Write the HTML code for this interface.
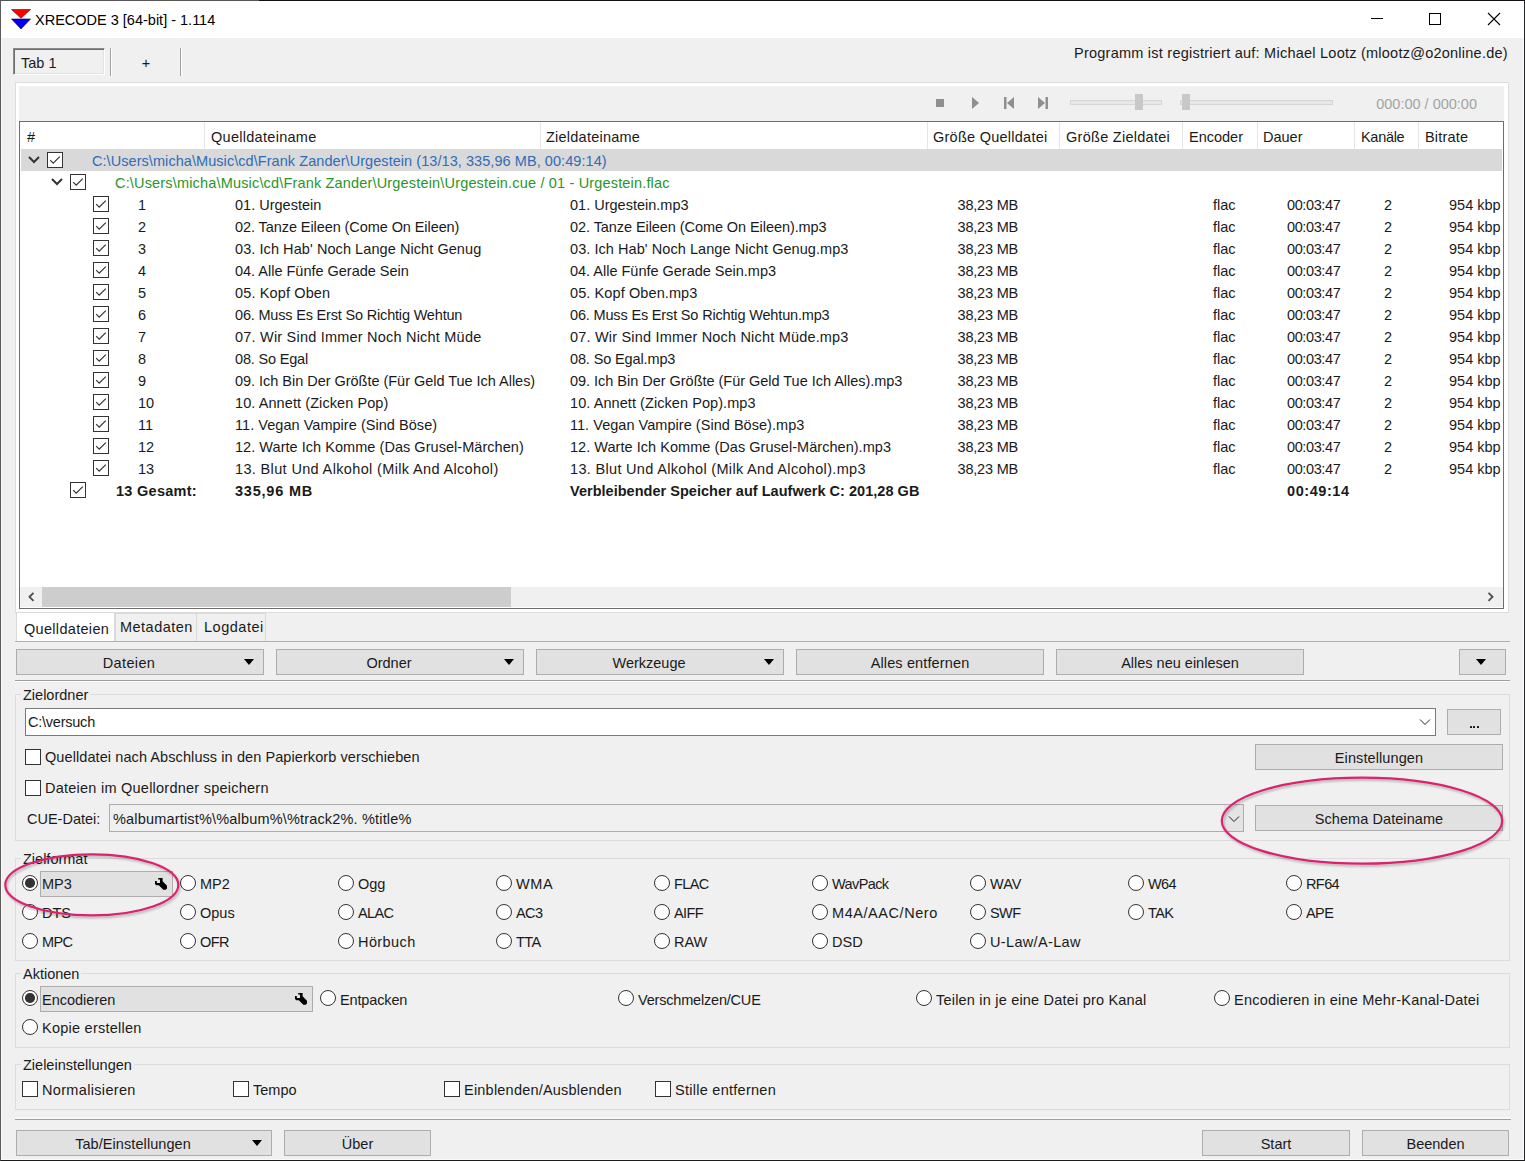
<!DOCTYPE html><html><head><meta charset="utf-8"><style>
html,body{margin:0;padding:0}
body{width:1525px;height:1161px;position:relative;overflow:hidden;background:#f0f0f0;font-family:"Liberation Sans",sans-serif;font-size:14.5px;color:#1a1a1a}
.t{position:absolute;white-space:nowrap;line-height:20px;height:20px}
.r{position:absolute}
.cb{position:absolute;width:16px;height:16px;box-sizing:border-box;border:1px solid #333;background:#fff}
.cb svg{position:absolute;left:-1px;top:-1px}
.rb{position:absolute;width:16px;height:16px;box-sizing:border-box;border:1px solid #333;border-radius:50%;background:#fff}
.rb .dot{position:absolute;left:2.25px;top:2.25px;width:9.5px;height:9.5px;border-radius:50%;background:#333}
.tri{position:absolute;width:0;height:0}
b{font-weight:bold}
</style></head><body>
<div class="r" style="left:0px;top:0px;width:1525px;height:1161px;box-sizing:border-box;border:1px solid #383838;border-left-color:#5a5a5a;border-right-color:#202828;border-bottom-color:#1c1c1c"></div>
<div class="r" style="left:0px;top:0px;width:259px;height:1px;background:#555"></div>
<div class="r" style="left:259px;top:0px;width:1266px;height:1px;background:#111"></div>
<div class="r" style="left:1px;top:1159px;width:1523px;height:1px;background:#fafafa"></div>
<div class="r" style="left:1px;top:38px;width:1px;height:1121px;background:#fafafa"></div>
<div class="r" style="left:1523px;top:38px;width:1px;height:1121px;background:#fafafa"></div>
<div class="r" style="left:1px;top:1px;width:1523px;height:37px;background:#fff"></div>
<svg class="r" style="left:11px;top:9px" width="20" height="21" viewBox="0 0 20 21">
<path d="M0.5 0.5 H19.5 L10 9.2 Z" fill="#f00" stroke="#600" stroke-width="0.6"/>
<path d="M0.5 10 H19.5 L10 20 Z" fill="#00e" stroke="#006" stroke-width="0.6"/></svg>
<div class="t " style="left:35px;top:10px;color:#000">XRECODE 3 [64-bit] - 1.114</div>
<div class="r" style="left:1371px;top:18px;width:12px;height:1px;background:#000"></div>
<div class="r" style="left:1429px;top:13px;width:12px;height:12px;box-sizing:border-box;border:1px solid #000"></div>
<svg class="r" style="left:1487px;top:12px" width="14" height="14" viewBox="0 0 14 14"><path d="M1 1 L13 13 M13 1 L1 13" stroke="#000" stroke-width="1.1"/></svg>
<div class="r" style="left:13px;top:48px;width:92px;height:27px;box-sizing:border-box;border-top:1px solid #8a8a8a;border-left:1px solid #8a8a8a;border-right:1px solid #fff;border-bottom:1px solid #fff;background:#f0f0f0;box-shadow:inset 1px 1px 0 #6e6e6e, inset -1px -1px 0 #e3e3e3"></div>
<div class="t " style="left:21px;top:53px;">Tab 1</div>
<div class="r" style="left:110px;top:48px;width:1px;height:28px;background:#a0a0a0;box-shadow:1px 0 0 #fff"></div>
<div class="t" style="left:-154px;width:600px;text-align:center;top:53px;">+</div>
<div class="r" style="left:180px;top:48px;width:1px;height:28px;background:#a0a0a0;box-shadow:1px 0 0 #fff"></div>
<div class="t " style="left:1074px;top:43px;letter-spacing:0.24px">Programm ist registriert auf: Michael Lootz (mlootz@o2online.de)</div>
<div class="r" style="left:15px;top:82px;width:1494px;height:531px;box-sizing:border-box;border:1px solid #dcdcdc;background:#fff"></div>
<div class="r" style="left:19px;top:86px;width:1485px;height:35px;background:#f0f0f0"></div>
<div class="r" style="left:936px;top:99px;width:8px;height:8px;background:#8f8f8f"></div>
<svg class="r" style="left:970px;top:96px" width="12" height="14" viewBox="0 0 12 14"><path d="M2 1 L9 7 L2 13 Z" fill="#8f8f8f"/></svg>
<svg class="r" style="left:1003px;top:96px" width="12" height="14" viewBox="0 0 12 14"><path d="M1 1 H3.5 V13 H1 Z M11 1 L4 7 L11 13 Z" fill="#8f8f8f"/></svg>
<svg class="r" style="left:1037px;top:96px" width="12" height="14" viewBox="0 0 12 14"><path d="M8.5 1 H11 V13 H8.5 Z M1 1 L8 7 L1 13 Z" fill="#8f8f8f"/></svg>
<div class="r" style="left:1070px;top:100px;width:92px;height:5px;box-sizing:border-box;background:#e7e7e7;border:1px solid #d6d6d6"></div>
<div class="r" style="left:1135px;top:94px;width:8px;height:16px;background:#c8c8c8"></div>
<div class="r" style="left:1180px;top:100px;width:153px;height:5px;box-sizing:border-box;background:#e7e7e7;border:1px solid #d6d6d6"></div>
<div class="r" style="left:1182px;top:94px;width:8px;height:16px;background:#c8c8c8"></div>
<div class="t" style="left:1077px;width:400px;text-align:right;top:94px;color:#a3a3a3">000:00 / 000:00</div>
<div class="r" style="left:19px;top:121px;width:1485px;height:488px;box-sizing:border-box;border:1px solid #6e6e6e;background:#fff"></div>
<div class="r" style="left:204px;top:122px;width:1px;height:27px;background:#e5e5e5"></div>
<div class="r" style="left:540px;top:122px;width:1px;height:27px;background:#e5e5e5"></div>
<div class="r" style="left:927px;top:122px;width:1px;height:27px;background:#e5e5e5"></div>
<div class="r" style="left:1059px;top:122px;width:1px;height:27px;background:#e5e5e5"></div>
<div class="r" style="left:1182px;top:122px;width:1px;height:27px;background:#e5e5e5"></div>
<div class="r" style="left:1257px;top:122px;width:1px;height:27px;background:#e5e5e5"></div>
<div class="r" style="left:1354px;top:122px;width:1px;height:27px;background:#e5e5e5"></div>
<div class="r" style="left:1418px;top:122px;width:1px;height:27px;background:#e5e5e5"></div>
<div class="r" style="left:20px;top:122px;width:1483px;height:485px;overflow:hidden">
<div class="t " style="left:7px;top:5px;">#</div>
<div class="t " style="left:191px;top:5px;letter-spacing:0.285px;">Quelldateiname</div>
<div class="t " style="left:526px;top:5px;letter-spacing:0.233px;">Zieldateiname</div>
<div class="t " style="left:913px;top:5px;letter-spacing:0.253px;">Größe Quelldatei</div>
<div class="t " style="left:1046px;top:5px;letter-spacing:0.279px;">Größe Zieldatei</div>
<div class="t " style="left:1169px;top:5px;">Encoder</div>
<div class="t " style="left:1243px;top:5px;">Dauer</div>
<div class="t " style="left:1341px;top:5px;letter-spacing:-0.300px;">Kanäle</div>
<div class="t " style="left:1405px;top:5px;letter-spacing:0.200px;">Bitrate</div>
</div>
<div class="r" style="left:21px;top:149px;width:1481px;height:22px;background:#d9d9d9"></div>
<svg class="r" style="left:28px;top:156px" width="12" height="8" viewBox="0 0 12 8"><path d="M1 1 L6 6 L11 1" fill="none" stroke="#333" stroke-width="2"/></svg>
<div class="cb" style="left:47px;top:152px"><svg width="16" height="16" viewBox="0 0 16 16"><path d="M3.2 8.2 L6.2 11.2 L12.8 4.6" fill="none" stroke="#333" stroke-width="1.2"/></svg></div>
<svg class="r" style="left:51px;top:178px" width="12" height="8" viewBox="0 0 12 8"><path d="M1 1 L6 6 L11 1" fill="none" stroke="#333" stroke-width="2"/></svg>
<div class="cb" style="left:70px;top:174px"><svg width="16" height="16" viewBox="0 0 16 16"><path d="M3.2 8.2 L6.2 11.2 L12.8 4.6" fill="none" stroke="#333" stroke-width="1.2"/></svg></div>
<div class="r" style="left:20px;top:122px;width:1482px;height:485px;overflow:hidden">
<div class="t " style="left:72px;top:29px;color:#2f6cb8;letter-spacing:0.06px">C:\Users\micha\Music\cd\Frank Zander\Urgestein (13/13, 335,96 MB, 00:49:14)</div>
<div class="t " style="left:95px;top:51px;color:#2a962a;letter-spacing:0.17px">C:\Users\micha\Music\cd\Frank Zander\Urgestein\Urgestein.cue / 01 - Urgestein.flac</div>
<div class="t " style="left:118px;top:73px;">1</div>
<div class="t " style="left:215px;top:73px;letter-spacing:0.008px">01. Urgestein</div>
<div class="t " style="left:550px;top:73px;letter-spacing:0.006px">01. Urgestein.mp3</div>
<div class="t" style="left:598px;width:400px;text-align:right;top:73px;letter-spacing:-0.200px;">38,23 MB</div>
<div class="t " style="left:1193px;top:73px;">flac</div>
<div class="t " style="left:1267px;top:73px;letter-spacing:-0.386px;">00:03:47</div>
<div class="t " style="left:1364px;top:73px;">2</div>
<div class="t " style="left:1429px;top:73px;">954 kbp</div>
<div class="t " style="left:118px;top:95px;">2</div>
<div class="t " style="left:215px;top:95px;letter-spacing:-0.081px">02. Tanze Eileen (Come On Eileen)</div>
<div class="t " style="left:550px;top:95px;letter-spacing:-0.072px">02. Tanze Eileen (Come On Eileen).mp3</div>
<div class="t" style="left:598px;width:400px;text-align:right;top:95px;letter-spacing:-0.200px;">38,23 MB</div>
<div class="t " style="left:1193px;top:95px;">flac</div>
<div class="t " style="left:1267px;top:95px;letter-spacing:-0.386px;">00:03:47</div>
<div class="t " style="left:1364px;top:95px;">2</div>
<div class="t " style="left:1429px;top:95px;">954 kbp</div>
<div class="t " style="left:118px;top:117px;">3</div>
<div class="t " style="left:215px;top:117px;letter-spacing:0.071px">03. Ich Hab' Noch Lange Nicht Genug</div>
<div class="t " style="left:550px;top:117px;letter-spacing:0.063px">03. Ich Hab' Noch Lange Nicht Genug.mp3</div>
<div class="t" style="left:598px;width:400px;text-align:right;top:117px;letter-spacing:-0.200px;">38,23 MB</div>
<div class="t " style="left:1193px;top:117px;">flac</div>
<div class="t " style="left:1267px;top:117px;letter-spacing:-0.386px;">00:03:47</div>
<div class="t " style="left:1364px;top:117px;">2</div>
<div class="t " style="left:1429px;top:117px;">954 kbp</div>
<div class="t " style="left:118px;top:139px;">4</div>
<div class="t " style="left:215px;top:139px;letter-spacing:-0.012px">04. Alle Fünfe Gerade Sein</div>
<div class="t " style="left:550px;top:139px;letter-spacing:-0.010px">04. Alle Fünfe Gerade Sein.mp3</div>
<div class="t" style="left:598px;width:400px;text-align:right;top:139px;letter-spacing:-0.200px;">38,23 MB</div>
<div class="t " style="left:1193px;top:139px;">flac</div>
<div class="t " style="left:1267px;top:139px;letter-spacing:-0.386px;">00:03:47</div>
<div class="t " style="left:1364px;top:139px;">2</div>
<div class="t " style="left:1429px;top:139px;">954 kbp</div>
<div class="t " style="left:118px;top:161px;">5</div>
<div class="t " style="left:215px;top:161px;letter-spacing:0.133px">05. Kopf Oben</div>
<div class="t " style="left:550px;top:161px;letter-spacing:0.100px">05. Kopf Oben.mp3</div>
<div class="t" style="left:598px;width:400px;text-align:right;top:161px;letter-spacing:-0.200px;">38,23 MB</div>
<div class="t " style="left:1193px;top:161px;">flac</div>
<div class="t " style="left:1267px;top:161px;letter-spacing:-0.386px;">00:03:47</div>
<div class="t " style="left:1364px;top:161px;">2</div>
<div class="t " style="left:1429px;top:161px;">954 kbp</div>
<div class="t " style="left:118px;top:183px;">6</div>
<div class="t " style="left:215px;top:183px;letter-spacing:-0.182px">06. Muss Es Erst So Richtig Wehtun</div>
<div class="t " style="left:550px;top:183px;letter-spacing:-0.162px">06. Muss Es Erst So Richtig Wehtun.mp3</div>
<div class="t" style="left:598px;width:400px;text-align:right;top:183px;letter-spacing:-0.200px;">38,23 MB</div>
<div class="t " style="left:1193px;top:183px;">flac</div>
<div class="t " style="left:1267px;top:183px;letter-spacing:-0.386px;">00:03:47</div>
<div class="t " style="left:1364px;top:183px;">2</div>
<div class="t " style="left:1429px;top:183px;">954 kbp</div>
<div class="t " style="left:118px;top:205px;">7</div>
<div class="t " style="left:215px;top:205px;letter-spacing:0.209px">07. Wir Sind Immer Noch Nicht Müde</div>
<div class="t " style="left:550px;top:205px;letter-spacing:0.186px">07. Wir Sind Immer Noch Nicht Müde.mp3</div>
<div class="t" style="left:598px;width:400px;text-align:right;top:205px;letter-spacing:-0.200px;">38,23 MB</div>
<div class="t " style="left:1193px;top:205px;">flac</div>
<div class="t " style="left:1267px;top:205px;letter-spacing:-0.386px;">00:03:47</div>
<div class="t " style="left:1364px;top:205px;">2</div>
<div class="t " style="left:1429px;top:205px;">954 kbp</div>
<div class="t " style="left:118px;top:227px;">8</div>
<div class="t " style="left:215px;top:227px;letter-spacing:-0.180px">08. So Egal</div>
<div class="t " style="left:550px;top:227px;letter-spacing:-0.129px">08. So Egal.mp3</div>
<div class="t" style="left:598px;width:400px;text-align:right;top:227px;letter-spacing:-0.200px;">38,23 MB</div>
<div class="t " style="left:1193px;top:227px;">flac</div>
<div class="t " style="left:1267px;top:227px;letter-spacing:-0.386px;">00:03:47</div>
<div class="t " style="left:1364px;top:227px;">2</div>
<div class="t " style="left:1429px;top:227px;">954 kbp</div>
<div class="t " style="left:118px;top:249px;">9</div>
<div class="t " style="left:215px;top:249px;letter-spacing:-0.026px">09. Ich Bin Der Größte (Für Geld Tue Ich Alles)</div>
<div class="t " style="left:550px;top:249px;letter-spacing:-0.024px">09. Ich Bin Der Größte (Für Geld Tue Ich Alles).mp3</div>
<div class="t" style="left:598px;width:400px;text-align:right;top:249px;letter-spacing:-0.200px;">38,23 MB</div>
<div class="t " style="left:1193px;top:249px;">flac</div>
<div class="t " style="left:1267px;top:249px;letter-spacing:-0.386px;">00:03:47</div>
<div class="t " style="left:1364px;top:249px;">2</div>
<div class="t " style="left:1429px;top:249px;">954 kbp</div>
<div class="t " style="left:118px;top:271px;">10</div>
<div class="t " style="left:215px;top:271px;letter-spacing:0.082px">10. Annett (Zicken Pop)</div>
<div class="t " style="left:550px;top:271px;letter-spacing:0.069px">10. Annett (Zicken Pop).mp3</div>
<div class="t" style="left:598px;width:400px;text-align:right;top:271px;letter-spacing:-0.200px;">38,23 MB</div>
<div class="t " style="left:1193px;top:271px;">flac</div>
<div class="t " style="left:1267px;top:271px;letter-spacing:-0.386px;">00:03:47</div>
<div class="t " style="left:1364px;top:271px;">2</div>
<div class="t " style="left:1429px;top:271px;">954 kbp</div>
<div class="t " style="left:118px;top:293px;">11</div>
<div class="t " style="left:215px;top:293px;letter-spacing:0.039px">11. Vegan Vampire (Sind Böse)</div>
<div class="t " style="left:550px;top:293px;letter-spacing:0.034px">11. Vegan Vampire (Sind Böse).mp3</div>
<div class="t" style="left:598px;width:400px;text-align:right;top:293px;letter-spacing:-0.200px;">38,23 MB</div>
<div class="t " style="left:1193px;top:293px;">flac</div>
<div class="t " style="left:1267px;top:293px;letter-spacing:-0.386px;">00:03:47</div>
<div class="t " style="left:1364px;top:293px;">2</div>
<div class="t " style="left:1429px;top:293px;">954 kbp</div>
<div class="t " style="left:118px;top:315px;">12</div>
<div class="t " style="left:215px;top:315px;letter-spacing:0.041px">12. Warte Ich Komme (Das Grusel-Märchen)</div>
<div class="t " style="left:550px;top:315px;letter-spacing:0.037px">12. Warte Ich Komme (Das Grusel-Märchen).mp3</div>
<div class="t" style="left:598px;width:400px;text-align:right;top:315px;letter-spacing:-0.200px;">38,23 MB</div>
<div class="t " style="left:1193px;top:315px;">flac</div>
<div class="t " style="left:1267px;top:315px;letter-spacing:-0.386px;">00:03:47</div>
<div class="t " style="left:1364px;top:315px;">2</div>
<div class="t " style="left:1429px;top:315px;">954 kbp</div>
<div class="t " style="left:118px;top:337px;">13</div>
<div class="t " style="left:215px;top:337px;letter-spacing:0.353px">13. Blut Und Alkohol (Milk And Alcohol)</div>
<div class="t " style="left:550px;top:337px;letter-spacing:0.319px">13. Blut Und Alkohol (Milk And Alcohol).mp3</div>
<div class="t" style="left:598px;width:400px;text-align:right;top:337px;letter-spacing:-0.200px;">38,23 MB</div>
<div class="t " style="left:1193px;top:337px;">flac</div>
<div class="t " style="left:1267px;top:337px;letter-spacing:-0.386px;">00:03:47</div>
<div class="t " style="left:1364px;top:337px;">2</div>
<div class="t " style="left:1429px;top:337px;">954 kbp</div>
<div class="t " style="left:96px;top:359px;letter-spacing:0.278px;"><b>13 Gesamt:</b></div>
<div class="t " style="left:215px;top:359px;letter-spacing:0.788px;"><b>335,96 MB</b></div>
<div class="t " style="left:550px;top:359px;letter-spacing:0.026px;"><b>Verbleibender Speicher auf Laufwerk C: 201,28 GB</b></div>
<div class="t " style="left:1267px;top:359px;letter-spacing:0.571px;"><b>00:49:14</b></div>
</div>
<div class="cb" style="left:93px;top:196px"><svg width="16" height="16" viewBox="0 0 16 16"><path d="M3.2 8.2 L6.2 11.2 L12.8 4.6" fill="none" stroke="#333" stroke-width="1.2"/></svg></div>
<div class="cb" style="left:93px;top:218px"><svg width="16" height="16" viewBox="0 0 16 16"><path d="M3.2 8.2 L6.2 11.2 L12.8 4.6" fill="none" stroke="#333" stroke-width="1.2"/></svg></div>
<div class="cb" style="left:93px;top:240px"><svg width="16" height="16" viewBox="0 0 16 16"><path d="M3.2 8.2 L6.2 11.2 L12.8 4.6" fill="none" stroke="#333" stroke-width="1.2"/></svg></div>
<div class="cb" style="left:93px;top:262px"><svg width="16" height="16" viewBox="0 0 16 16"><path d="M3.2 8.2 L6.2 11.2 L12.8 4.6" fill="none" stroke="#333" stroke-width="1.2"/></svg></div>
<div class="cb" style="left:93px;top:284px"><svg width="16" height="16" viewBox="0 0 16 16"><path d="M3.2 8.2 L6.2 11.2 L12.8 4.6" fill="none" stroke="#333" stroke-width="1.2"/></svg></div>
<div class="cb" style="left:93px;top:306px"><svg width="16" height="16" viewBox="0 0 16 16"><path d="M3.2 8.2 L6.2 11.2 L12.8 4.6" fill="none" stroke="#333" stroke-width="1.2"/></svg></div>
<div class="cb" style="left:93px;top:328px"><svg width="16" height="16" viewBox="0 0 16 16"><path d="M3.2 8.2 L6.2 11.2 L12.8 4.6" fill="none" stroke="#333" stroke-width="1.2"/></svg></div>
<div class="cb" style="left:93px;top:350px"><svg width="16" height="16" viewBox="0 0 16 16"><path d="M3.2 8.2 L6.2 11.2 L12.8 4.6" fill="none" stroke="#333" stroke-width="1.2"/></svg></div>
<div class="cb" style="left:93px;top:372px"><svg width="16" height="16" viewBox="0 0 16 16"><path d="M3.2 8.2 L6.2 11.2 L12.8 4.6" fill="none" stroke="#333" stroke-width="1.2"/></svg></div>
<div class="cb" style="left:93px;top:394px"><svg width="16" height="16" viewBox="0 0 16 16"><path d="M3.2 8.2 L6.2 11.2 L12.8 4.6" fill="none" stroke="#333" stroke-width="1.2"/></svg></div>
<div class="cb" style="left:93px;top:416px"><svg width="16" height="16" viewBox="0 0 16 16"><path d="M3.2 8.2 L6.2 11.2 L12.8 4.6" fill="none" stroke="#333" stroke-width="1.2"/></svg></div>
<div class="cb" style="left:93px;top:438px"><svg width="16" height="16" viewBox="0 0 16 16"><path d="M3.2 8.2 L6.2 11.2 L12.8 4.6" fill="none" stroke="#333" stroke-width="1.2"/></svg></div>
<div class="cb" style="left:93px;top:460px"><svg width="16" height="16" viewBox="0 0 16 16"><path d="M3.2 8.2 L6.2 11.2 L12.8 4.6" fill="none" stroke="#333" stroke-width="1.2"/></svg></div>
<div class="cb" style="left:70px;top:482px"><svg width="16" height="16" viewBox="0 0 16 16"><path d="M3.2 8.2 L6.2 11.2 L12.8 4.6" fill="none" stroke="#333" stroke-width="1.2"/></svg></div>
<div class="r" style="left:20px;top:587px;width:1483px;height:20px;background:#f0f0f0"></div>
<div class="r" style="left:42px;top:587px;width:469px;height:20px;background:#cdcdcd"></div>
<svg class="r" style="left:26px;top:592px" width="10" height="10" viewBox="0 0 10 10"><path d="M7.5 0.8 L3.5 4.8 L7.5 8.8" fill="none" stroke="#505050" stroke-width="1.9"/></svg>
<svg class="r" style="left:1486px;top:592px" width="10" height="10" viewBox="0 0 10 10"><path d="M2.5 0.8 L6.5 4.8 L2.5 8.8" fill="none" stroke="#505050" stroke-width="1.9"/></svg>
<div class="r" style="left:115px;top:613px;width:82px;height:29px;box-sizing:border-box;border:1px solid #d9d9d9;border-bottom:none;background:#f0f0f0"></div>
<div class="r" style="left:197px;top:613px;width:69px;height:29px;box-sizing:border-box;border:1px solid #d9d9d9;border-left:none;border-bottom:none;background:#f0f0f0"></div>
<div class="r" style="left:16px;top:612px;width:99px;height:30px;box-sizing:border-box;border:1px solid #d9d9d9;border-bottom:none;background:#fff"></div>
<div class="t " style="left:24px;top:619px;letter-spacing:0.309px;">Quelldateien</div>
<div class="r" style="left:15px;top:641px;width:1495px;height:1px;background:#b0b0b0"></div>
<div class="t " style="left:120px;top:617px;letter-spacing:0.475px;">Metadaten</div>
<div class="t " style="left:204px;top:617px;letter-spacing:0.514px;">Logdatei</div>
<div class="r" style="left:16px;top:649px;width:248px;height:26px;background:#e1e1e1;border:1px solid #adadad;box-sizing:border-box"></div>
<div class="t" style="left:-171.0px;width:600px;text-align:center;top:653px;letter-spacing:0.350px;">Dateien</div>
<div class="tri" style="left:244.0px;top:658.5px;border-left:5.5px solid transparent;border-right:5.5px solid transparent;border-top:6px solid #000"></div>
<div class="r" style="left:276px;top:649px;width:248px;height:26px;background:#e1e1e1;border:1px solid #adadad;box-sizing:border-box"></div>
<div class="t" style="left:89.0px;width:600px;text-align:center;top:653px;">Ordner</div>
<div class="tri" style="left:504.0px;top:658.5px;border-left:5.5px solid transparent;border-right:5.5px solid transparent;border-top:6px solid #000"></div>
<div class="r" style="left:536px;top:649px;width:248px;height:26px;background:#e1e1e1;border:1px solid #adadad;box-sizing:border-box"></div>
<div class="t" style="left:349.0px;width:600px;text-align:center;top:653px;">Werkzeuge</div>
<div class="tri" style="left:764.0px;top:658.5px;border-left:5.5px solid transparent;border-right:5.5px solid transparent;border-top:6px solid #000"></div>
<div class="r" style="left:796px;top:649px;width:248px;height:26px;background:#e1e1e1;border:1px solid #adadad;box-sizing:border-box"></div>
<div class="t" style="left:620.0px;width:600px;text-align:center;top:653px;letter-spacing:0.129px;">Alles entfernen</div>
<div class="r" style="left:1056px;top:649px;width:248px;height:26px;background:#e1e1e1;border:1px solid #adadad;box-sizing:border-box"></div>
<div class="t" style="left:880.0px;width:600px;text-align:center;top:653px;">Alles neu einlesen</div>
<div class="r" style="left:1459px;top:649px;width:47px;height:26px;background:#e1e1e1;border:1px solid #adadad;box-sizing:border-box"></div>
<div class="tri" style="left:1476.0px;top:658.5px;border-left:5.5px solid transparent;border-right:5.5px solid transparent;border-top:6px solid #000"></div>
<div class="r" style="left:15px;top:680px;width:1495px;height:1px;background:#a0a0a0;box-shadow:0 1px 0 #fff"></div>
<div class="r" style="left:15px;top:694px;width:1495px;height:147px;box-sizing:border-box;border:1px solid #dcdcdc"></div>
<div class="t" style="left:21px;top:685px;padding:0 2px;background:#f0f0f0">Zielordner</div>
<div class="r" style="left:25px;top:708px;width:1411px;height:28px;box-sizing:border-box;border:1px solid #7a7a7a;background:#fff"></div>
<div class="t " style="left:28px;top:712px;letter-spacing:-0.233px;">C:\versuch</div>
<svg class="r" style="left:1419px;top:718px" width="12" height="8" viewBox="0 0 12 8"><path d="M1 1.5 L6 6.5 L11 1.5" fill="none" stroke="#222" stroke-width="1"/></svg>
<div class="r" style="left:1447px;top:709px;width:54px;height:26px;background:#e1e1e1;border:1px solid #adadad;box-sizing:border-box"></div>
<div class="t" style="left:1174.0px;width:600px;text-align:center;top:713px;"></div>
<div class="r" style="left:1469.5px;top:726px;width:2px;height:2px;background:#111;border-radius:0.5px"></div>
<div class="r" style="left:1473px;top:726px;width:2px;height:2px;background:#111;border-radius:0.5px"></div>
<div class="r" style="left:1476.5px;top:726px;width:2px;height:2px;background:#111;border-radius:0.5px"></div>
<div class="cb" style="left:25px;top:749px"></div>
<div class="t " style="left:45px;top:747px;letter-spacing:0.085px;">Quelldatei nach Abschluss in den Papierkorb verschieben</div>
<div class="r" style="left:1255px;top:744px;width:248px;height:26px;background:#e1e1e1;border:1px solid #adadad;box-sizing:border-box"></div>
<div class="t" style="left:1079.0px;width:600px;text-align:center;top:748px;letter-spacing:0.092px;">Einstellungen</div>
<div class="cb" style="left:25px;top:780px"></div>
<div class="t " style="left:45px;top:778px;letter-spacing:0.242px;">Dateien im Quellordner speichern</div>
<div class="t " style="left:27px;top:809px;">CUE-Datei:</div>
<div class="r" style="left:109px;top:804px;width:1135px;height:28px;box-sizing:border-box;border:1px solid #adadad;background:#f0f0f0"></div>
<div class="r" style="left:1224px;top:805px;width:19px;height:26px;background:#e4e4e4"></div>
<div class="t " style="left:113px;top:809px;letter-spacing:0.176px;">%albumartist%\%album%\%track2%. %title%</div>
<svg class="r" style="left:1228px;top:815px" width="12" height="8" viewBox="0 0 12 8"><path d="M1 1.5 L6 6.5 L11 1.5" fill="none" stroke="#222" stroke-width="1"/></svg>
<div class="r" style="left:1255px;top:805px;width:248px;height:26px;background:#e1e1e1;border:1px solid #adadad;box-sizing:border-box"></div>
<div class="t" style="left:1079.0px;width:600px;text-align:center;top:809px;letter-spacing:0.067px;">Schema Dateiname</div>
<div class="r" style="left:15px;top:858px;width:1495px;height:103px;box-sizing:border-box;border:1px solid #dcdcdc"></div>
<div class="t" style="left:21px;top:849px;padding:0 2px;background:#f0f0f0">Zielformat</div>
<div class="r" style="left:40px;top:871px;width:133px;height:26px;background:#e1e1e1;border:1px solid #adadad;box-sizing:border-box"></div>
<div class="rb" style="left:22px;top:875px"><div class="dot"></div></div>
<div class="t " style="left:42px;top:874px;">MP3</div>
<div class="rb" style="left:180px;top:875px"></div>
<div class="t " style="left:200px;top:874px;">MP2</div>
<div class="rb" style="left:338px;top:875px"></div>
<div class="t " style="left:358px;top:874px;">Ogg</div>
<div class="rb" style="left:496px;top:875px"></div>
<div class="t " style="left:516px;top:874px;letter-spacing:0.650px;">WMA</div>
<div class="rb" style="left:654px;top:875px"></div>
<div class="t " style="left:674px;top:874px;letter-spacing:-0.600px;">FLAC</div>
<div class="rb" style="left:812px;top:875px"></div>
<div class="t " style="left:832px;top:874px;letter-spacing:-0.600px;">WavPack</div>
<div class="rb" style="left:970px;top:875px"></div>
<div class="t " style="left:990px;top:874px;">WAV</div>
<div class="rb" style="left:1128px;top:875px"></div>
<div class="t " style="left:1148px;top:874px;letter-spacing:-0.600px;">W64</div>
<div class="rb" style="left:1286px;top:875px"></div>
<div class="t " style="left:1306px;top:874px;letter-spacing:-0.600px;">RF64</div>
<div class="rb" style="left:22px;top:904px"></div>
<div class="t " style="left:42px;top:903px;">DTS</div>
<div class="rb" style="left:180px;top:904px"></div>
<div class="t " style="left:200px;top:903px;">Opus</div>
<div class="rb" style="left:338px;top:904px"></div>
<div class="t " style="left:358px;top:903px;letter-spacing:-0.600px;">ALAC</div>
<div class="rb" style="left:496px;top:904px"></div>
<div class="t " style="left:516px;top:903px;letter-spacing:-0.600px;">AC3</div>
<div class="rb" style="left:654px;top:904px"></div>
<div class="t " style="left:674px;top:903px;letter-spacing:-0.600px;">AIFF</div>
<div class="rb" style="left:812px;top:904px"></div>
<div class="t " style="left:832px;top:903px;letter-spacing:0.564px;">M4A/AAC/Nero</div>
<div class="rb" style="left:970px;top:904px"></div>
<div class="t " style="left:990px;top:903px;letter-spacing:-0.600px;">SWF</div>
<div class="rb" style="left:1128px;top:904px"></div>
<div class="t " style="left:1148px;top:903px;letter-spacing:-0.600px;">TAK</div>
<div class="rb" style="left:1286px;top:904px"></div>
<div class="t " style="left:1306px;top:903px;letter-spacing:-0.600px;">APE</div>
<div class="rb" style="left:22px;top:933px"></div>
<div class="t " style="left:42px;top:932px;letter-spacing:-0.600px;">MPC</div>
<div class="rb" style="left:180px;top:933px"></div>
<div class="t " style="left:200px;top:932px;letter-spacing:-0.600px;">OFR</div>
<div class="rb" style="left:338px;top:933px"></div>
<div class="t " style="left:358px;top:932px;letter-spacing:0.417px;">Hörbuch</div>
<div class="rb" style="left:496px;top:933px"></div>
<div class="t " style="left:516px;top:932px;letter-spacing:-0.600px;">TTA</div>
<div class="rb" style="left:654px;top:933px"></div>
<div class="t " style="left:674px;top:932px;">RAW</div>
<div class="rb" style="left:812px;top:933px"></div>
<div class="t " style="left:832px;top:932px;">DSD</div>
<div class="rb" style="left:970px;top:933px"></div>
<div class="t " style="left:990px;top:932px;letter-spacing:0.340px;">U-Law/A-Law</div>
<svg class="r" style="left:155px;top:878px" width="13" height="13" viewBox="0 0 13 13"><path d="M3.2 0 L7.6 0 L7.6 3.3 L12 7.7 L12 10.5 L10.7 11.8 L8.3 11.8 L3.8 7.3 L1.3 7.3 L0 6 L0 3 L1.8 3 L1.8 5 L5 5 L5 1.6 L3.2 1.6 Z" fill="#000"/></svg>
<div class="r" style="left:15px;top:973px;width:1495px;height:75px;box-sizing:border-box;border:1px solid #dcdcdc"></div>
<div class="t" style="left:21px;top:964px;padding:0 2px;background:#f0f0f0">Aktionen</div>
<div class="r" style="left:40px;top:986px;width:273px;height:26px;background:#e1e1e1;border:1px solid #adadad;box-sizing:border-box"></div>
<div class="rb" style="left:22px;top:990px"><div class="dot"></div></div>
<div class="t " style="left:42px;top:990px;">Encodieren</div>
<svg class="r" style="left:295px;top:993px" width="13" height="13" viewBox="0 0 13 13"><path d="M3.2 0 L7.6 0 L7.6 3.3 L12 7.7 L12 10.5 L10.7 11.8 L8.3 11.8 L3.8 7.3 L1.3 7.3 L0 6 L0 3 L1.8 3 L1.8 5 L5 5 L5 1.6 L3.2 1.6 Z" fill="#000"/></svg>
<div class="rb" style="left:320px;top:990px"></div>
<div class="t " style="left:340px;top:990px;letter-spacing:-0.137px;">Entpacken</div>
<div class="rb" style="left:618px;top:990px"></div>
<div class="t " style="left:638px;top:990px;letter-spacing:-0.193px;">Verschmelzen/CUE</div>
<div class="rb" style="left:916px;top:990px"></div>
<div class="t " style="left:936px;top:990px;letter-spacing:0.200px;">Teilen in je eine Datei pro Kanal</div>
<div class="rb" style="left:1214px;top:990px"></div>
<div class="t " style="left:1234px;top:990px;letter-spacing:0.218px;">Encodieren in eine Mehr-Kanal-Datei</div>
<div class="rb" style="left:22px;top:1019px"></div>
<div class="t " style="left:42px;top:1018px;letter-spacing:0.250px;">Kopie erstellen</div>
<div class="r" style="left:15px;top:1064px;width:1495px;height:46px;box-sizing:border-box;border:1px solid #dcdcdc"></div>
<div class="t" style="left:21px;top:1055px;padding:0 2px;background:#f0f0f0">Zieleinstellungen</div>
<div class="cb" style="left:22px;top:1081px"></div>
<div class="t " style="left:42px;top:1080px;letter-spacing:0.333px;">Normalisieren</div>
<div class="cb" style="left:233px;top:1081px"></div>
<div class="t " style="left:253px;top:1080px;">Tempo</div>
<div class="cb" style="left:444px;top:1081px"></div>
<div class="t " style="left:464px;top:1080px;letter-spacing:0.215px;">Einblenden/Ausblenden</div>
<div class="cb" style="left:655px;top:1081px"></div>
<div class="t " style="left:675px;top:1080px;letter-spacing:0.267px;">Stille entfernen</div>
<div class="r" style="left:15px;top:1119px;width:1496px;height:1px;background:#a0a0a0;box-shadow:0 -1.5px 0 #fff"></div>
<div class="r" style="left:16px;top:1130px;width:256px;height:26px;background:#e1e1e1;border:1px solid #adadad;box-sizing:border-box"></div>
<div class="t" style="left:-167.0px;width:600px;text-align:center;top:1134px;letter-spacing:0.075px;">Tab/Einstellungen</div>
<div class="tri" style="left:252.0px;top:1139.5px;border-left:5.5px solid transparent;border-right:5.5px solid transparent;border-top:6px solid #000"></div>
<div class="r" style="left:284px;top:1130px;width:147px;height:26px;background:#e1e1e1;border:1px solid #adadad;box-sizing:border-box"></div>
<div class="t" style="left:57.5px;width:600px;text-align:center;top:1134px;">Über</div>
<div class="r" style="left:1202px;top:1130px;width:148px;height:26px;background:#e1e1e1;border:1px solid #adadad;box-sizing:border-box"></div>
<div class="t" style="left:976.0px;width:600px;text-align:center;top:1134px;">Start</div>
<div class="r" style="left:1362px;top:1130px;width:147px;height:26px;background:#e1e1e1;border:1px solid #adadad;box-sizing:border-box"></div>
<div class="t" style="left:1135.5px;width:600px;text-align:center;top:1134px;">Beenden</div>
<svg class="r" style="left:0;top:0;pointer-events:none" width="1525" height="1161" viewBox="0 0 1525 1161">
<defs><filter id="sh" x="-10%" y="-10%" width="120%" height="130%"><feDropShadow dx="1.2" dy="1.8" stdDeviation="1.2" flood-color="#000" flood-opacity="0.28"/></filter></defs>
<g filter="url(#sh)">
<ellipse cx="1362" cy="820.7" rx="140.2" ry="43" fill="none" stroke="#da2470" stroke-width="2.2"/>
<ellipse cx="91.8" cy="884.9" rx="86.5" ry="30.5" fill="none" stroke="#da2470" stroke-width="2.2"/>
</g></svg>
</body></html>
